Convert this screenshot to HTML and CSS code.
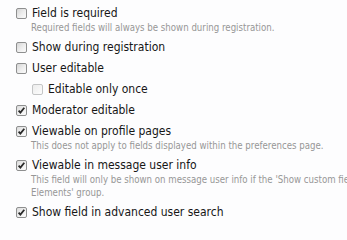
FILE: index.html
```html
<!DOCTYPE html>
<html lang="en">
<head>
<meta charset="utf-8">
<title>Field options</title>
<link rel="stylesheet" href="styles.css">
</head>
<body>
<ul class="options">
  <li class="option">
    <label class="row"><span class="box"></span><span class="label">Field is required</span></label>
    <p class="hint">Required fields will always be shown during registration.</p>
  </li>
  <li class="option">
    <label class="row"><span class="box"></span><span class="label">Show during registration</span></label>
  </li>
  <li class="option">
    <label class="row"><span class="box"></span><span class="label">User editable</span></label>
  </li>
  <li class="option sub">
    <label class="row"><span class="box disabled"></span><span class="label">Editable only once</span></label>
  </li>
  <li class="option">
    <label class="row"><span class="box checked"><svg viewBox="0 0 11 11" class="tick"><path d="M2.6 5.6 L4.4 7.6 L8.3 2.8" /></svg></span><span class="label">Moderator editable</span></label>
  </li>
  <li class="option">
    <label class="row"><span class="box checked"><svg viewBox="0 0 11 11" class="tick"><path d="M2.6 5.6 L4.4 7.6 L8.3 2.8" /></svg></span><span class="label">Viewable on profile pages</span></label>
    <p class="hint">This does not apply to fields displayed within the preferences page.</p>
  </li>
  <li class="option">
    <label class="row"><span class="box checked"><svg viewBox="0 0 11 11" class="tick"><path d="M2.6 5.6 L4.4 7.6 L8.3 2.8" /></svg></span><span class="label">Viewable in message user info</span></label>
    <p class="hint">This field will only be shown on message user info if the 'Show custom fields' option is enabled in the 'Message User Info<br>Elements' group.</p>
  </li>
  <li class="option">
    <label class="row"><span class="box checked"><svg viewBox="0 0 11 11" class="tick"><path d="M2.6 5.6 L4.4 7.6 L8.3 2.8" /></svg></span><span class="label">Show field in advanced user search</span></label>
  </li>
</ul>
</body>
</html>
```
FILE: styles.css
```css
html, body {
  margin: 0;
  padding: 0;
  background: #fdfdfe;
}
body {
  font-family: "DejaVu Sans Condensed", "DejaVu Sans", sans-serif;
  color: #161616;
  overflow: hidden;
}
.options {
  list-style: none;
  margin: 0;
  padding: 5px 0 0 16px;
}
.option {
  margin: 0 0 5px 0;
}
.option.sub {
  padding-left: 16px;
}
.row {
  display: flex;
  align-items: center;
  gap: 5px;
  height: 16px;
  font-size: 12px;
  line-height: 16px;
}
.box {
  box-sizing: border-box;
  width: 11px;
  height: 11px;
  flex: none;
  border: 1px solid #8e8f8f;
  border-radius: 2px;
  background: linear-gradient(135deg, #d6d6d6 0%, #eeeeee 55%, #fbfbfb 100%);
  position: relative;
}
.box.disabled {
  border-color: #c4c5c6;
  background: linear-gradient(135deg, #ededed 0%, #f6f6f6 60%, #fdfdfd 100%);
}
.box.checked {
  background: linear-gradient(135deg, #dcdcdc 0%, #f0f0f0 55%, #fcfcfc 100%);
}
.tick {
  position: absolute;
  left: -1px;
  top: -1px;
  width: 11px;
  height: 11px;
}
.tick path {
  fill: none;
  stroke: #2a2a2a;
  stroke-width: 1.8;
}
.hint {
  margin: 0;
  padding-left: 15px;
  font-size: 9.6px;
  line-height: 13px;
  color: #979797;
  white-space: nowrap;
}
```
